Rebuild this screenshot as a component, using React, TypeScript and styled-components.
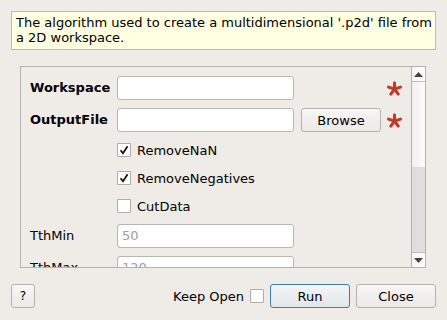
import React from 'react';
import styled, { createGlobalStyle } from 'styled-components';

const GlobalStyle = createGlobalStyle`
  html, body {
    margin: 0;
    padding: 0;
    background: #efebe7;
  }
  body {
    font-family: 'DejaVu Sans', 'Liberation Sans', sans-serif;
    font-size: 12px;
    color: #000;
  }
`;

const Dialog = styled.div`
  width: 447px;
  height: 320px;
  box-sizing: border-box;
  padding: 11px 11px 12px 11px;
  display: flex;
  flex-direction: column;
`;

const Description = styled.div`
  box-sizing: border-box;
  height: 39px;
  background: #ffffe1;
  border: 1px solid #bdbbb0;
  padding: 3px 0 4px 4px;
  font-size: 13px;
  line-height: 15px;
`;

const ScrollArea = styled.div`
  margin: 16px 10px 0 9px;
  height: 202px;
  box-sizing: border-box;
  border: 1px solid #b6b2ae;
  display: flex;
  overflow: hidden;
`;

const Content = styled.div`
  flex: 1;
  padding: 9px 0 0 9px;
  display: grid;
  grid-template-columns: 87px 177px 7px 80px 6px 15px;
  grid-auto-rows: min-content;
  row-gap: 8px;
  align-items: center;
`;

const Label = styled.div<{ $bold?: boolean }>`
  grid-column: 1;
  font-weight: ${p => (p.$bold ? 'bold' : 'normal')};
  font-size: 13px;
  height: 24px;
  line-height: 24px;
`;

const TextInput = styled.div`
  grid-column: 2;
  box-sizing: border-box;
  height: 24px;
  background: #fff;
  border: 1px solid #b9b5b1;
  border-radius: 3px;
  padding: 0 4px;
  line-height: 22px;
  font-size: 13px;
  color: #a0a0a0;
`;

const Button = styled.div<{ $primary?: boolean }>`
  box-sizing: border-box;
  height: 24px;
  width: 80px;
  border: 1px solid ${p => (p.$primary ? '#3d7fb0' : '#b6b2ae')};
  border-radius: 3px;
  background: ${p =>
    p.$primary
      ? 'linear-gradient(#f3f5f7, #e2e6ea)'
      : 'linear-gradient(#f8f7f6, #ebe8e5)'};
  display: flex;
  align-items: center;
  justify-content: center;
  font-size: 13px;
`;

const BrowseButton = styled(Button)`
  grid-column: 4;
`;

const Star = styled.svg`
  grid-column: 6;
  display: block;
`;

const CheckRow = styled.label`
  grid-column: 2 / span 5;
  height: 20px;
  display: flex;
  align-items: center;
  gap: 6px;
  font-size: 13px;
`;

const Box = styled.span`
  box-sizing: border-box;
  width: 14px;
  height: 14px;
  background: #fff;
  border: 1px solid #b0aca8;
  border-radius: 1px;
  display: flex;
  align-items: center;
  justify-content: center;
`;

const ScrollBar = styled.div`
  width: 13px;
  border-left: 1px solid #b6b2ae;
  display: flex;
  flex-direction: column;
`;

const Arrow = styled.div<{ $down?: boolean }>`
  height: 14px;
  background: linear-gradient(90deg, #f6f5f4, #fdfdfd);
  border-bottom: ${p => (p.$down ? 'none' : '1px solid #c4c0bc')};
  border-top: ${p => (p.$down ? '1px solid #c4c0bc' : 'none')};
  display: flex;
  align-items: center;
  justify-content: center;
`;

const Handle = styled.div`
  height: 85px;
  background: linear-gradient(90deg, #f1f0ef, #fcfcfc);
`;

const Track = styled.div`
  flex: 1;
  background: #dfdedd;
`;

const Footer = styled.div`
  margin-top: 16px;
  display: flex;
  align-items: center;
  gap: 6px;
`;

const HelpButton = styled(Button)`
  width: 24px;
  font-size: 12px;
  margin-right: auto;
`;

const KeepOpen = styled.span`
  font-size: 13px;
  display: flex;
  align-items: center;
  gap: 6px;
`;

const Check = () => (
  <svg width="10" height="10" viewBox="0 0 10 10">
    <path d="M1.5 5.2 L4 8.3 L8.6 1.2" fill="none" stroke="#111" strokeWidth="1.7" />
  </svg>
);

const Asterisk = () => (
  <Star width="15" height="15" viewBox="0 0 15 15">
    {[0, 72, 144, 216, 288].map(a => {
      const r = (a - 90) * (Math.PI / 180);
      return (
        <line
          key={a}
          x1="7.5"
          y1="8"
          x2={7.5 + 6.3 * Math.cos(r)}
          y2={8 + 6.3 * Math.sin(r)}
          stroke="#c0392b"
          strokeWidth="3"
          strokeLinecap="round"
        />
      );
    })}
  </Star>
);

const Tri = ({ down }: { down?: boolean }) => (
  <svg width="9" height="5" viewBox="0 0 9 5">
    <path d={down ? 'M0 0 L9 0 L4.5 5 Z' : 'M0 5 L9 5 L4.5 0 Z'} fill="#444" />
  </svg>
);

export default function App() {
  return (
    <>
      <GlobalStyle />
      <Dialog>
        <Description>
          The algorithm used to create a multidimensional '.p2d' file from a 2D workspace.
        </Description>
        <ScrollArea>
          <Content>
            <Label $bold>Workspace</Label>
            <TextInput />
            <Asterisk />

            <Label $bold>OutputFile</Label>
            <TextInput />
            <BrowseButton>Browse</BrowseButton>
            <Asterisk />

            <CheckRow>
              <Box><Check /></Box>RemoveNaN
            </CheckRow>
            <CheckRow>
              <Box><Check /></Box>RemoveNegatives
            </CheckRow>
            <CheckRow>
              <Box />CutData
            </CheckRow>

            <Label>TthMin</Label>
            <TextInput>50</TextInput>
            <Label>TthMax</Label>
            <TextInput>120</TextInput>
          </Content>
          <ScrollBar>
            <Arrow><Tri /></Arrow>
            <Handle />
            <Track />
            <Arrow $down><Tri down /></Arrow>
          </ScrollBar>
        </ScrollArea>
        <Footer>
          <HelpButton>?</HelpButton>
          <KeepOpen>
            Keep Open <Box />
          </KeepOpen>
          <Button $primary>Run</Button>
          <Button>Close</Button>
        </Footer>
      </Dialog>
    </>
  );
}
